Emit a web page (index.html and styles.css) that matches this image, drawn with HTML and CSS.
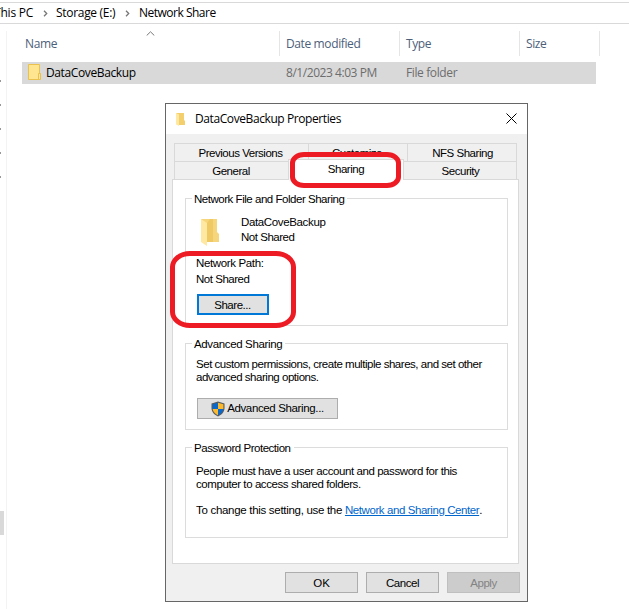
FILE: index.html
```html
<!DOCTYPE html>
<html lang="en">
<head>
<meta charset="utf-8">
<title>Network Share</title>
<link rel="stylesheet" href="styles.css">
</head>
<body>
<div class="explorer">
  <div class="address">
    <span class="crumb">This PC</span>
    <svg class="chev" viewBox="0 0 5 7"><path d="M1 .8 3.7 3.5 1 6.2"/></svg>
    <span class="crumb">Storage (E:)</span>
    <svg class="chev" viewBox="0 0 5 7"><path d="M1 .8 3.7 3.5 1 6.2"/></svg>
    <span class="crumb share-crumb">Network Share</span>
  </div>
  <div class="browser">
    <div class="nav">
      <i class="dot"></i><i class="dot"></i><i class="dot"></i><i class="dot"></i><i class="dot"></i>
      <i class="nav-sel"></i>
    </div>
    <div class="files">
      <div class="columns">
        <div class="col name">Name<svg class="sort" viewBox="0 0 9 5"><path d="M.7 4.5 4.5.8 8.3 4.5"/></svg></div>
        <div class="col">Date modified</div>
        <div class="col">Type</div>
        <div class="col size">Size</div>
      </div>
      <div class="row">
        <svg class="file-icon" viewBox="0 0 13 16"><path d="M.5.5h11v9h1v6H.5z" fill="#ffe58f" stroke="#eac14d"/><path d="M10.5 15v-5.500h2" fill="none" stroke="#eac14d"/></svg>
        <span class="fname">DataCoveBackup</span>
        <span class="fdate">8/1/2023 4:03 PM</span>
        <span class="ftype">File folder</span>
      </div>
    </div>
  </div>
</div>

<div class="dialog">
  <div class="titlebar">
    <svg class="title-icon" viewBox="0 0 18 26"><path d="M0 0h16v14l2 2v8H5z" fill="#f3cf6e"/><path d="M0 0l6 3v23l-6-3z" fill="#ffe9a2"/></svg>
    <span class="title">DataCoveBackup Properties</span>
    <svg class="close" viewBox="0 0 11 11"><path d="M.5.5l10 10M10.500.5l-10 10"/></svg>
  </div>
  <div class="tabs">
    <div class="tab-row back">
      <div class="tab">Previous Versions</div><div class="tab">Customize</div><div class="tab">NFS Sharing</div>
    </div>
    <div class="tab-row front">
      <div class="tab">General</div><div class="tab active">Sharing</div><div class="tab">Security</div>
    </div>
  </div>
  <div class="panel">
    <div class="group network">
      <div class="legend">Network File and Folder Sharing</div>
      <div class="folder">
        <svg class="folder-icon" viewBox="0 0 19 27"><path d="M0 0h16v13l2 2v8H5z" fill="#f6d67c"/><path d="M6 4 9 0h3v23H6z" fill="#efc964"/><path d="M0 0l6 4v23l-6-4z" fill="#ffe8a1"/></svg>
        <div class="folder-text"><div class="wide">DataCoveBackup</div><div>Not Shared</div></div>
      </div>
      <div class="wide path">Network Path:</div>
      <div class="path">Not Shared</div>
      <div class="btn focus">Share...</div>
    </div>
    <div class="group advanced">
      <div class="legend wide">Advanced Sharing</div>
      <p>Set custom permissions, create multiple shares, and set other<br>advanced sharing options.</p>
      <div class="btn adv">
        <svg class="shield" viewBox="0 0 14 16"><path d="M7 .5 13.500 2.500V7c0 4-3 7-6.500 8.500C3.500 14 .5 11 .5 7V2.500z" fill="#555b60"/><path d="M7 1.800V8H1.600V3.300z" fill="#0a68cb"/><path d="M7 1.800V8h5.400V3.300z" fill="#fdb92e"/><path d="M7 8H1.600C2 11 4.500 13 7 14.300z" fill="#fdb92e"/><path d="M7 8h5.400C12 11 9.500 13 7 14.300z" fill="#0a68cb"/></svg>
        Advanced Sharing...
      </div>
    </div>
    <div class="group password">
      <div class="legend">Password Protection</div>
      <p class="people">People must have a user account and password for this<br>computer to access shared folders.</p>
      <p class="setting"><span class="lead">To change this setting, use the </span><a>Network and Sharing Center</a>.</p>
    </div>
  </div>
  <div class="actions">
    <div class="btn ok">OK</div><div class="btn">Cancel</div><div class="btn disabled">Apply</div>
  </div>
</div>

<div class="mark mark-tab"></div>
<div class="mark mark-share"></div>
</body>
</html>
```
FILE: styles.css
```css
* { box-sizing: border-box; }
body { margin: 0; width: 629px; height: 609px; overflow: hidden; background: #fff; position: relative;
  font-family: "Open Sans", "Noto Sans", sans-serif; font-size: 12px; letter-spacing: -0.38px; color: #000; }
svg { display: block; flex: none; }
i { display: block; }

/* Explorer window */
.explorer { height: 609px; padding-top: 2px; display: flex; flex-direction: column; }
.address { height: 22px; border: solid #d9d9d9; border-width: 1px 0; display: flex; align-items: center; white-space: nowrap; }
.crumb { line-height: 20px; }
.crumb:first-child { margin-left: -6px; width: 41px; letter-spacing: -0.2px; }
.crumb:nth-child(3) { width: 60px; letter-spacing: -0.3px; }
.share-crumb { letter-spacing: -0.5px; }
.chev { width: 5px; height: 7px; margin: 0 8px 0 8px; }
.crumb:nth-child(3) + .chev { margin: 0 9px 0 9px; }
.chev path { fill: none; stroke: #777; stroke-width: 1.3; }
.browser { flex: 1; display: flex; padding-top: 7px; }
.nav { width: 7px; border-right: 1px solid #f3f3f3; padding-top: 49px; }
.dot { width: 1px; height: 2px; background: #999; margin-bottom: 22px; }
.nav-sel { width: 4px; height: 24px; background: #d9d9d9; margin-top: 311px; }
.files { flex: 1; }
.columns { display: flex; height: 25px; color: #4c607a; }
.col { width: 120px; padding-left: 6px; line-height: 26px; border-right: 1px solid #e5e5e5; }
.name { width: 273px; padding-left: 18px; display: flex; }
.sort { width: 9px; height: 5px; margin-left: 89px; }
.sort path { fill: none; stroke: #777; }
.size { width: 80px; }
.row { margin: 6px 0 0 15px; width: 574px; height: 22px; background: #d9d9d9; display: flex; line-height: 22px; color: #6d6d6d; white-space: nowrap; }
.file-icon { width: 13px; height: 16px; margin: 2px 5px 0 6px; }
.fname { color: #000; width: 240px; }
.fdate { width: 120px; letter-spacing: -0.45px; }
.nav .dot:nth-child(5) { margin-bottom: 333px; }
.nav .nav-sel { margin-top: 0; }

/* Properties dialog */
.dialog { position: absolute; left: 165px; top: 103px; width: 363px; height: 499px; border: 1px solid #666; background: #f0f0f0;
  font-family: "Liberation Sans", Arial, sans-serif; font-size: 11.5px; letter-spacing: -0.47px; line-height: 13px; white-space: nowrap; }
.titlebar { height: 30px; background: #fff; display: flex; align-items: center; padding: 0 10px; }
.title-icon { width: 9px; height: 13px; margin-right: 10px; }
.title { font: 12px/30px "Open Sans", "Noto Sans", sans-serif; letter-spacing: -0.41px; flex: 1; }
.close { width: 11px; height: 11px; margin: -2px 0 0; }
.close path { fill: none; stroke: #000; }
.tabs { margin: 9px 10px 0 8px; height: 36px; }
.tab-row { display: flex; height: 18px; }
.tab { border: solid #d9d9d9; border-width: 1px 0 0 1px; text-align: center; line-height: 19px; }
.tab:last-child { border-right-width: 1px; }
.back .tab { width: 134px; padding-right: 2px; }
.back .tab:nth-child(2) { width: 99px; }
.back .tab:last-child { width: 110px; padding: 0 0 0 1px; }
.front .tab { width: 114px; padding-right: 1px; line-height: 18px; }
.front .active { width: 116px; height: 21px; margin-top: -2px; padding: 0; background: #fff; z-index: 1; line-height: 18px; border-right-width: 1px; }
.front .tab:last-child { width: 113px; padding: 0 0 0 1px; border-left: 0; }
.panel { margin: 0 8px 0 6px; height: 385px; background: #fff; border: 1px solid #d9d9d9; padding: 18px 10px 0 12px; }
.group { border: 1px solid #dcdcdc; padding: 0 10px; }
.legend { width: max-content; background: #fff; height: 14px; margin: -7px 0 0 -4px; padding: 0 3px 0 2px; line-height: 15px; }
.wide { letter-spacing: -0.36px; }
.network { height: 128px; margin-bottom: 17px; }
.folder { display: flex; margin-top: 10px; }
.folder-icon { width: 19px; height: 27px; margin: 3px 21px -1px 5px; }
.folder-text { line-height: 15px; margin-top: -1px; }
.path { line-height: 16px; }
.folder + .path { margin-top: 10px; }
.btn { width: 73px; height: 21px; background: #e1e1e1; border: 1px solid #adadad; display: flex; align-items: center; justify-content: center; }
.focus { width: 72px; border: 2px solid #0078d7; margin: 7px 0 0 1px; padding: 1px 1px 0 0; }
.advanced { height: 87px; margin-bottom: 17px; }
p { margin: 7px 0 0; }
.adv { width: 141px; margin: 14px 0 0 1px; letter-spacing: -0.36px; }
.shield { width: 14px; height: 16px; margin-right: 2px; }
.password { height: 91px; }
.people { margin-top: 10px; letter-spacing: -0.42px; }
.setting { margin-top: 13px; }
.lead { letter-spacing: -0.3px; white-space: pre; }
a { color: #0066cc; text-decoration: underline; letter-spacing: -0.42px; }
.actions { display: flex; justify-content: flex-end; gap: 8px; margin: 8px 7px 0 0; }
.actions .btn { padding-top: 1px; }
.ok { letter-spacing: 0; }
.disabled { background: #ccc; border-color: #bfbfbf; color: #838383; }

/* Highlight outlines */
.mark { position: absolute; z-index: 2; border: 5px solid #ed1c24; }
.mark-tab { left: 290px; top: 152px; width: 111px; height: 36px; border-radius: 14px / 11px; }
.mark-share { left: 170px; top: 251px; width: 126px; height: 77px; border-radius: 20px / 16px; }
```
